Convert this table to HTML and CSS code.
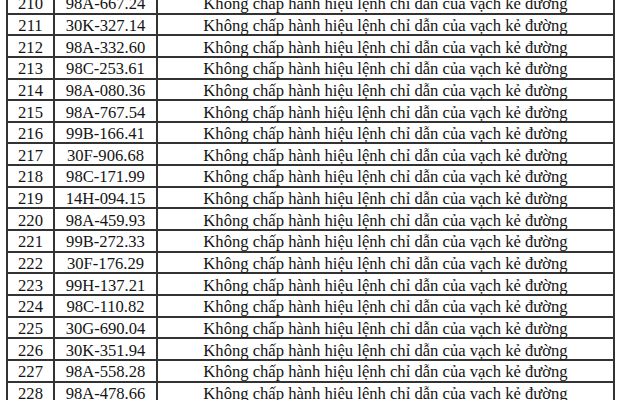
FILE: index.html
```html
<!DOCTYPE html>
<html lang="vi">
<head>
<meta charset="utf-8">
<title>Danh sách vi phạm</title>
<link rel="stylesheet" href="styles.css">
</head>
<body>
<div class="sheet">
<table class="list">
<colgroup><col class="c-no"><col class="c-plate"><col class="c-desc"></colgroup>
<tbody>
<tr><td>210</td><td>98A-667.24</td><td>Không chấp hành hiệu lệnh chỉ dẫn của vạch kẻ đường</td></tr>
<tr><td>211</td><td>30K-327.14</td><td>Không chấp hành hiệu lệnh chỉ dẫn của vạch kẻ đường</td></tr>
<tr><td>212</td><td>98A-332.60</td><td>Không chấp hành hiệu lệnh chỉ dẫn của vạch kẻ đường</td></tr>
<tr><td>213</td><td>98C-253.61</td><td>Không chấp hành hiệu lệnh chỉ dẫn của vạch kẻ đường</td></tr>
<tr><td>214</td><td>98A-080.36</td><td>Không chấp hành hiệu lệnh chỉ dẫn của vạch kẻ đường</td></tr>
<tr><td>215</td><td>98A-767.54</td><td>Không chấp hành hiệu lệnh chỉ dẫn của vạch kẻ đường</td></tr>
<tr><td>216</td><td>99B-166.41</td><td>Không chấp hành hiệu lệnh chỉ dẫn của vạch kẻ đường</td></tr>
<tr><td>217</td><td>30F-906.68</td><td>Không chấp hành hiệu lệnh chỉ dẫn của vạch kẻ đường</td></tr>
<tr><td>218</td><td>98C-171.99</td><td>Không chấp hành hiệu lệnh chỉ dẫn của vạch kẻ đường</td></tr>
<tr><td>219</td><td>14H-094.15</td><td>Không chấp hành hiệu lệnh chỉ dẫn của vạch kẻ đường</td></tr>
<tr><td>220</td><td>98A-459.93</td><td>Không chấp hành hiệu lệnh chỉ dẫn của vạch kẻ đường</td></tr>
<tr><td>221</td><td>99B-272.33</td><td>Không chấp hành hiệu lệnh chỉ dẫn của vạch kẻ đường</td></tr>
<tr><td>222</td><td>30F-176.29</td><td>Không chấp hành hiệu lệnh chỉ dẫn của vạch kẻ đường</td></tr>
<tr><td>223</td><td>99H-137.21</td><td>Không chấp hành hiệu lệnh chỉ dẫn của vạch kẻ đường</td></tr>
<tr><td>224</td><td>98C-110.82</td><td>Không chấp hành hiệu lệnh chỉ dẫn của vạch kẻ đường</td></tr>
<tr><td>225</td><td>30G-690.04</td><td>Không chấp hành hiệu lệnh chỉ dẫn của vạch kẻ đường</td></tr>
<tr><td>226</td><td>30K-351.94</td><td>Không chấp hành hiệu lệnh chỉ dẫn của vạch kẻ đường</td></tr>
<tr><td>227</td><td>98A-558.28</td><td>Không chấp hành hiệu lệnh chỉ dẫn của vạch kẻ đường</td></tr>
<tr><td>228</td><td>98A-478.66</td><td>Không chấp hành hiệu lệnh chỉ dẫn của vạch kẻ đường</td></tr>
</tbody>
</table>
</div>
</body>
</html>
```
FILE: styles.css
```css
html, body {
  margin: 0;
  padding: 0;
  background: #ffffff;
}
.sheet {
  width: 640px;
  height: 400px;
  overflow: hidden;
  padding-left: 6px;
  box-sizing: border-box;
}
.list {
  margin-top: -9px;
  border-collapse: collapse;
  table-layout: fixed;
  width: 607px;
  font-family: "Liberation Serif", "Times New Roman", serif;
  font-size: 16.6px;
  color: #141414;
}
.c-no { width: 47px; }
.c-plate { width: 103px; }
.c-desc { width: 457px; }
.list td {
  border: 2px solid #333333;
  height: 17.65px;
  padding: 2px 0 0 0;
  text-align: center;
  vertical-align: middle;
  line-height: 17px;
  white-space: nowrap;
}
```
